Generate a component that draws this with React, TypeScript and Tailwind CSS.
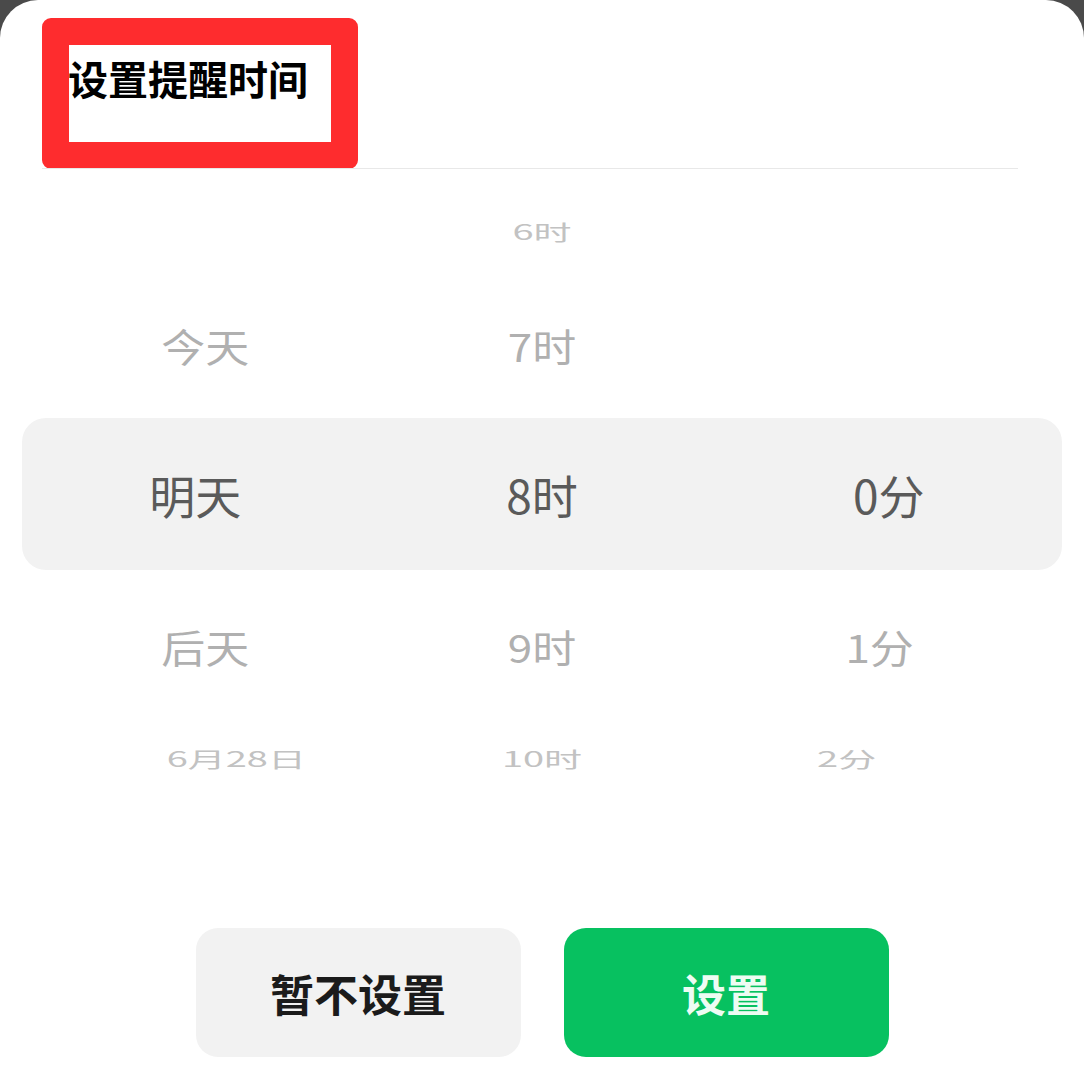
const FONT = { fontFamily: '"Noto Sans CJK SC", "Noto Sans", sans-serif' };

type Cell = { text: string, shift: string };

const FAR_TOP: Cell[] = [
  { text: '', shift: '' },
  { text: '6时', shift: '' },
  { text: '', shift: '' },
];

const NEAR_TOP: Cell[] = [
  { text: '今天', shift: 'translate-x-[10px]' },
  { text: '7时', shift: '' },
  { text: '', shift: '' },
];

const SELECTED: Cell[] = [
  { text: '明天', shift: '' },
  { text: '8时', shift: '' },
  { text: '0分', shift: '' },
];

const NEAR_BOTTOM: Cell[] = [
  { text: '后天', shift: 'translate-x-[10px]' },
  { text: '9时', shift: '' },
  { text: '1分', shift: '-translate-x-[9px]' },
];

const FAR_BOTTOM: Cell[] = [
  { text: '6月28日', shift: 'translate-x-[41px]' },
  { text: '10时', shift: '' },
  { text: '2分', shift: '-translate-x-[42px]' },
];

function Row({ cells, cls, textCls }: { cells: Cell[], cls: string, textCls: string }) {
  return (
    <div className={`grid grid-cols-3 items-center mx-[22px] ${cls}`}>
      {cells.map((c, idx) => (
        <div key={idx} className="flex justify-center">
          <span className={`leading-none whitespace-nowrap ${textCls} ${c.shift}`}>{c.text}</span>
        </div>
      ))}
    </div>
  );
}

export default function App() {
  return (
    <div className="w-[1084px] h-[1070px] bg-[#4a4a4a] overflow-hidden" style={FONT}>
      <div className="bg-white rounded-t-[38px] h-full flex flex-col">
        <div className="pt-[18px] pl-[42px]">
          <div className="w-[316px] h-[151px] border-[27px] border-[#fe2c2e] rounded-[9px] pt-[13px]">
            <h1 className="text-[40px] font-bold leading-none text-black -ml-[1px] whitespace-nowrap">设置提醒时间</h1>
          </div>
        </div>
        <div className="h-px bg-[#e8e8e8] ml-[42px] w-[976px] -mt-px" />

        <Row cells={FAR_TOP} cls="h-[60px] mt-[32px]" textCls="text-[38px] text-[#c2c2c2] scale-y-[0.55]" />
        <Row cells={NEAR_TOP} cls="h-[60px] mt-[54px]" textCls="text-[44px] text-[#b0b0b0] scale-y-[0.88]" />
        <Row cells={SELECTED} cls="h-[152px] mt-[43px] bg-[#f2f2f2] rounded-[24px]" textCls="text-[46px] text-[#5a5a5a]" />
        <Row cells={NEAR_BOTTOM} cls="h-[60px] mt-[46px]" textCls="text-[44px] text-[#b0b0b0] scale-y-[0.88]" />
        <Row cells={FAR_BOTTOM} cls="h-[60px] mt-[52px]" textCls="text-[38px] text-[#c2c2c2] scale-y-[0.55]" />

        <div className="mt-auto pb-[13px] flex justify-center gap-[43px]">
          <button className="w-[325px] h-[129px] rounded-[22px] bg-[#f2f2f2] text-[44px] font-bold text-[#1b1b1b]">暂不设置</button>
          <button className="w-[325px] h-[129px] rounded-[22px] bg-[#07c160] text-[44px] font-bold text-[#eefcf3]">设置</button>
        </div>
      </div>
    </div>
  );
}
